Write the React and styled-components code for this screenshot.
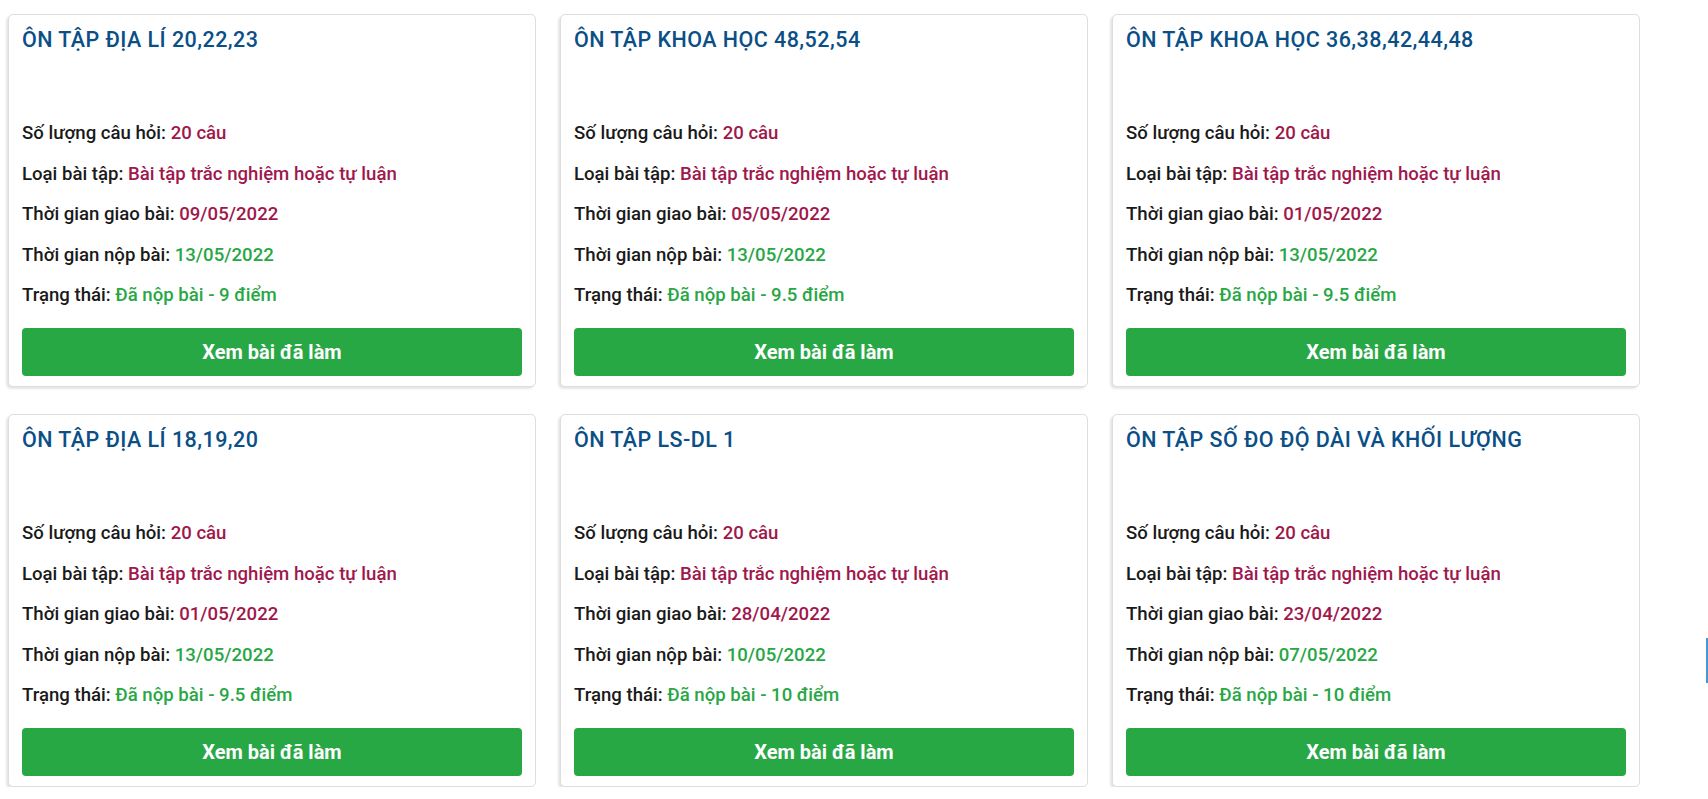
import styled, { createGlobalStyle } from "styled-components";

const GlobalStyle = createGlobalStyle`
    html, body {
        margin: 0;
        padding: 0;
        background: #fff;
        font-family: Roboto, "Noto Sans", Arial, sans-serif;
    }
`;

const Page = styled.div`
    padding: 14px 0 0 8px;
`;
const Grid = styled.div`
    display: grid;
    grid-template-columns: repeat(3, 528px);
    column-gap: 24px;
    row-gap: 27px;
`;
const Card = styled.div`
    background: #fff;
    border: 1px solid #dedede;
    border-radius: 5px;
    box-shadow: -2px 2px 2px rgba(0,0,0,0.1);
    padding: 13px 13px 10.5px 13px;
    display: flex;
    flex-direction: column;
`;
const Title = styled.div`
    color: #0a4f86;
    font-size: 21.5px;
    font-weight: 500;
    letter-spacing: 0.45px;
    line-height: 24px;
    min-height: 77px;
    margin-bottom: 16px;
`;
const Row = styled.div`
    color: #1a1a1a;
    font-size: 18.6px;
    font-weight: 500;
    line-height: 24.5px;
    margin-bottom: 16px;
`;
const Value = styled.span`
    color: ${props => props.tone === "green" ? "#28a745" : "#a0174c"};
`;
const Button = styled.button`
    margin-top: 4px;
    height: 48px;
    width: 100%;
    border: none;
    border-radius: 4px;
    background: #28a745;
    color: #fff;
    font-family: Roboto, "Noto Sans", Arial, sans-serif;
    font-size: 20px;
    font-weight: 700;
    cursor: pointer;
`;
const SideTab = styled.div`
    position: fixed;
    right: 0;
    top: 638px;
    width: 2px;
    height: 45px;
    background: #4a96d2;
`;

const items = [
    { title: "ÔN TẬP ĐỊA LÍ 20,22,23", giao: "09/05/2022", nop: "13/05/2022", diem: "9" },
    { title: "ÔN TẬP KHOA HỌC 48,52,54", giao: "05/05/2022", nop: "13/05/2022", diem: "9.5" },
    { title: "ÔN TẬP KHOA HỌC 36,38,42,44,48", giao: "01/05/2022", nop: "13/05/2022", diem: "9.5" },
    { title: "ÔN TẬP ĐỊA LÍ 18,19,20", giao: "01/05/2022", nop: "13/05/2022", diem: "9.5" },
    { title: "ÔN TẬP LS-DL 1", giao: "28/04/2022", nop: "10/05/2022", diem: "10" },
    { title: "ÔN TẬP SỐ ĐO ĐỘ DÀI VÀ KHỐI LƯỢNG", giao: "23/04/2022", nop: "07/05/2022", diem: "10" },
];

function ExamCard(props){
    return <Card>
        <Title>{props.title}</Title>
        <Row>Số lượng câu hỏi: <Value>20 câu</Value></Row>
        <Row>Loại bài tập: <Value>Bài tập trắc nghiệm hoặc tự luận</Value></Row>
        <Row>Thời gian giao bài: <Value>{props.giao}</Value></Row>
        <Row>Thời gian nộp bài: <Value tone="green">{props.nop}</Value></Row>
        <Row>Trạng thái: <Value tone="green">Đã nộp bài - {props.diem} điểm</Value></Row>
        <Button>Xem bài đã làm</Button>
    </Card>
}

export default function App(){
    return <Page>
        <GlobalStyle />
        <Grid>
            {items.map((item, i) => <ExamCard key={i} {...item} />)}
        </Grid>
        <SideTab />
    </Page>
}
